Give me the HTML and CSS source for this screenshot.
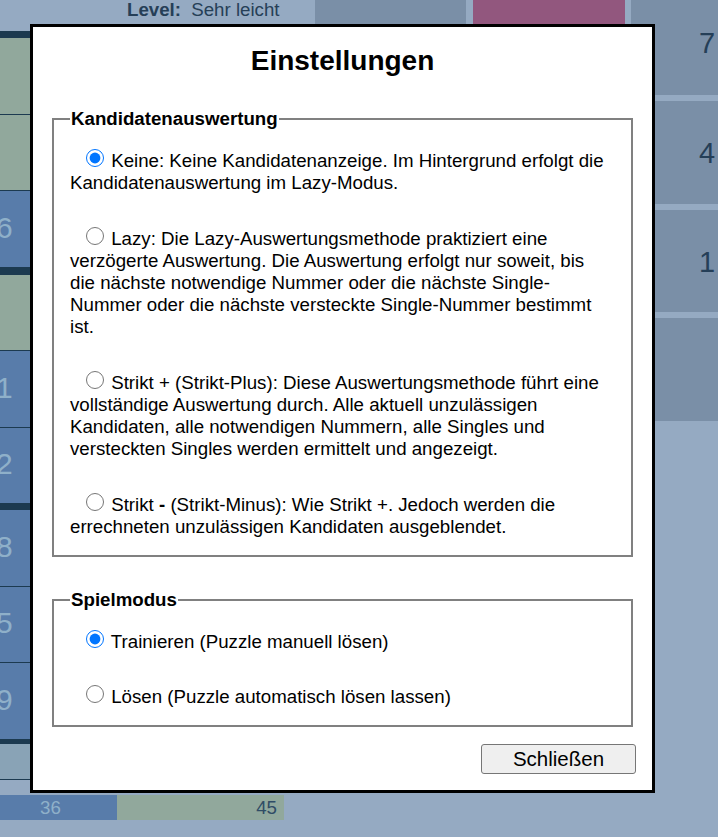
FILE: index.html
```html
<!DOCTYPE html>
<html lang="de">
<head>
<meta charset="utf-8">
<title>Einstellungen</title>
<link rel="stylesheet" href="styles.css">
</head>
<body>
<div class="app">
  <div class="left">
    <div class="level"><span class="lbl">Level:</span> <span class="val">Sehr leicht</span></div>
    <div class="board">
      <div class="band">
        <div class="cell"></div>
        <div class="cell"></div>
        <div class="cell blue"><span class="dg">6</span></div>
      </div>
      <div class="sep s8"></div>
      <div class="band">
        <div class="cell"></div>
        <div class="cell blue"><span class="dg">1</span></div>
        <div class="cell blue"><span class="dg">2</span></div>
      </div>
      <div class="sep s7"></div>
      <div class="band">
        <div class="cell blue"><span class="dg">8</span></div>
        <div class="cell blue"><span class="dg">5</span></div>
        <div class="cell blue"><span class="dg">9</span></div>
      </div>
      <div class="sep s5"></div>
      <div class="pale"></div>
    </div>
    <div class="stats">
      <div class="bar bar-blue">36</div>
      <div class="bar bar-green">45</div>
    </div>
  </div>
  <div class="right">
    <div class="rc"></div>
    <div class="rc mag"></div>
    <div class="rc"><span class="rd">7</span></div>
    <div class="rc"></div>
    <div class="rc"></div>
    <div class="rc"><span class="rd">4</span></div>
    <div class="rc"></div>
    <div class="rc"></div>
    <div class="rc"><span class="rd">1</span></div>
    <div class="rc"></div>
    <div class="rc"></div>
    <div class="rc"></div>
  </div>
</div>

<div class="modal">
  <div class="modal-title">Einstellungen</div>
  <fieldset class="group">
    <legend>Kandidatenauswertung</legend>
    <p class="opt"><label><input type="radio" name="eval" checked> Keine: Keine Kandidatenanzeige. Im Hintergrund erfolgt die Kandidatenauswertung im Lazy-Modus.</label></p>
    <p class="opt"><label><input type="radio" name="eval"> Lazy: Die Lazy-Auswertungsmethode praktiziert eine verzögerte Auswertung. Die Auswertung erfolgt nur soweit, bis die nächste notwendige Nummer oder die nächste Single-Nummer oder die nächste versteckte Single-Nummer bestimmt ist.</label></p>
    <p class="opt"><label><input type="radio" name="eval"> Strikt + (Strikt-Plus): Diese Auswertungsmethode führt eine vollständige Auswertung durch. Alle aktuell unzulässigen Kandidaten, alle notwendigen Nummern, alle Singles und versteckten Singles werden ermittelt und angezeigt.</label></p>
    <p class="opt"><label><input type="radio" name="eval"> Strikt <b class="sign">-</b> (Strikt-Minus): Wie Strikt +. Jedoch werden die errechneten unzulässigen Kandidaten ausgeblendet.</label></p>
  </fieldset>
  <fieldset class="group group-mode">
    <legend>Spielmodus</legend>
    <p class="opt"><label><input type="radio" name="mode" checked> Trainieren (Puzzle manuell lösen)</label></p>
    <p class="opt"><label><input type="radio" name="mode"> Lösen (Puzzle automatisch lösen lassen)</label></p>
  </fieldset>
  <div class="actions">
    <button class="btn" type="button">Schließen</button>
  </div>
</div>
</body>
</html>
```

FILE: styles.css
```css
html, body {
  margin: 0;
  padding: 0;
}
body {
  width: 718px;
  height: 837px;
  overflow: hidden;
  background: #95aac2;
  font-family: "Liberation Sans", Arial, sans-serif;
  position: relative;
}
.app {
  display: flex;
  align-items: flex-start;
}
.left {
  width: 315px;
  flex: none;
}
.level {
  height: 31px;
  box-sizing: border-box;
  padding-left: 127px;
  padding-top: 1px;
  font-size: 18.7px;
  line-height: 17px;
  color: #263f57;
  white-space: nowrap;
}
.level .lbl {
  font-weight: bold;
  margin-right: 5px;
}
.board {
  border-top: 7px solid #1c3a50;
}
.cell {
  height: 75.5px;
  background: #91a89c;
}
.cell + .cell {
  border-top: 1px solid #1c3a50;
}
.cell.blue {
  background: #587caa;
  color: #8fb0c9;
}
.dg {
  display: block;
  font-size: 30px;
  line-height: 30px;
  padding-top: 21.5px;
  margin-left: -4px;
}
.sep {
  background: #1c3a50;
}
.s8 { height: 8px; }
.s7 { height: 7px; }
.s5 { height: 5px; }
.pale {
  height: 35.5px;
  background: #89a3b6;
  border-bottom: 1px solid #1c3a50;
}
.stats {
  display: flex;
  margin-top: 15px;
  height: 25px;
  font-size: 18.7px;
  line-height: 25px;
}
.bar {
  box-sizing: border-box;
}
.bar-blue {
  width: 117px;
  background: #587caa;
  color: #8fb0c9;
  padding-left: 40px;
}
.bar-green {
  width: 167px;
  background: #91a89c;
  color: #2f4c66;
  text-align: right;
  padding-right: 7px;
}
.right {
  flex: none;
  display: grid;
  grid-template-columns: 151px 152px 152px;
  grid-template-rows: 104px 103px 102px 103px;
  column-gap: 6.5px;
  row-gap: 6px;
  margin-top: -9px;
}
.rc {
  background: #7a8fa7;
  color: #253f58;
  box-sizing: border-box;
  font-size: 29px;
  line-height: 29px;
  padding: 37.5px 0 0 68px;
}
.rc.mag {
  background: #92577e;
}

.modal {
  position: absolute;
  left: 30px;
  top: 24px;
  width: 625px;
  box-sizing: border-box;
  border: 3px solid #000;
  background: #fff;
  padding: 0 16px 16px;
  font-size: 18.7px;
  color: #000;
}
.modal-title {
  margin: 18px 0 0;
  font-size: 28px;
  line-height: 32px;
  font-weight: bold;
  text-align: center;
}
.group {
  margin: 31px 3px 0;
  border: 2px solid #808080;
  padding: 20px 21px 17px 16px;
  min-inline-size: 0;
}
.group-mode {
  margin-top: 32px;
}
.group legend {
  padding: 0 1px;
  font-weight: bold;
}
.opt {
  margin: 0;
  line-height: 22px;
}
.opt + .opt {
  margin-top: 34px;
}
.group-mode .opt + .opt {
  margin-top: 33px;
}
.opt input {
  width: 18px;
  height: 18px;
  margin: -3px 2px 1.5px 16px;
  vertical-align: baseline;
}
.sign {
  font-weight: bold;
}
.actions {
  margin-top: 16.5px;
  text-align: right;
}
.btn {
  width: 155px;
  height: 30px;
  padding: 0;
  font-family: "Liberation Sans", Arial, sans-serif;
  font-size: 20.5px;
  color: #000;
  background: #efefef;
  border: 1px solid #767676;
  border-radius: 3px;
}
```
